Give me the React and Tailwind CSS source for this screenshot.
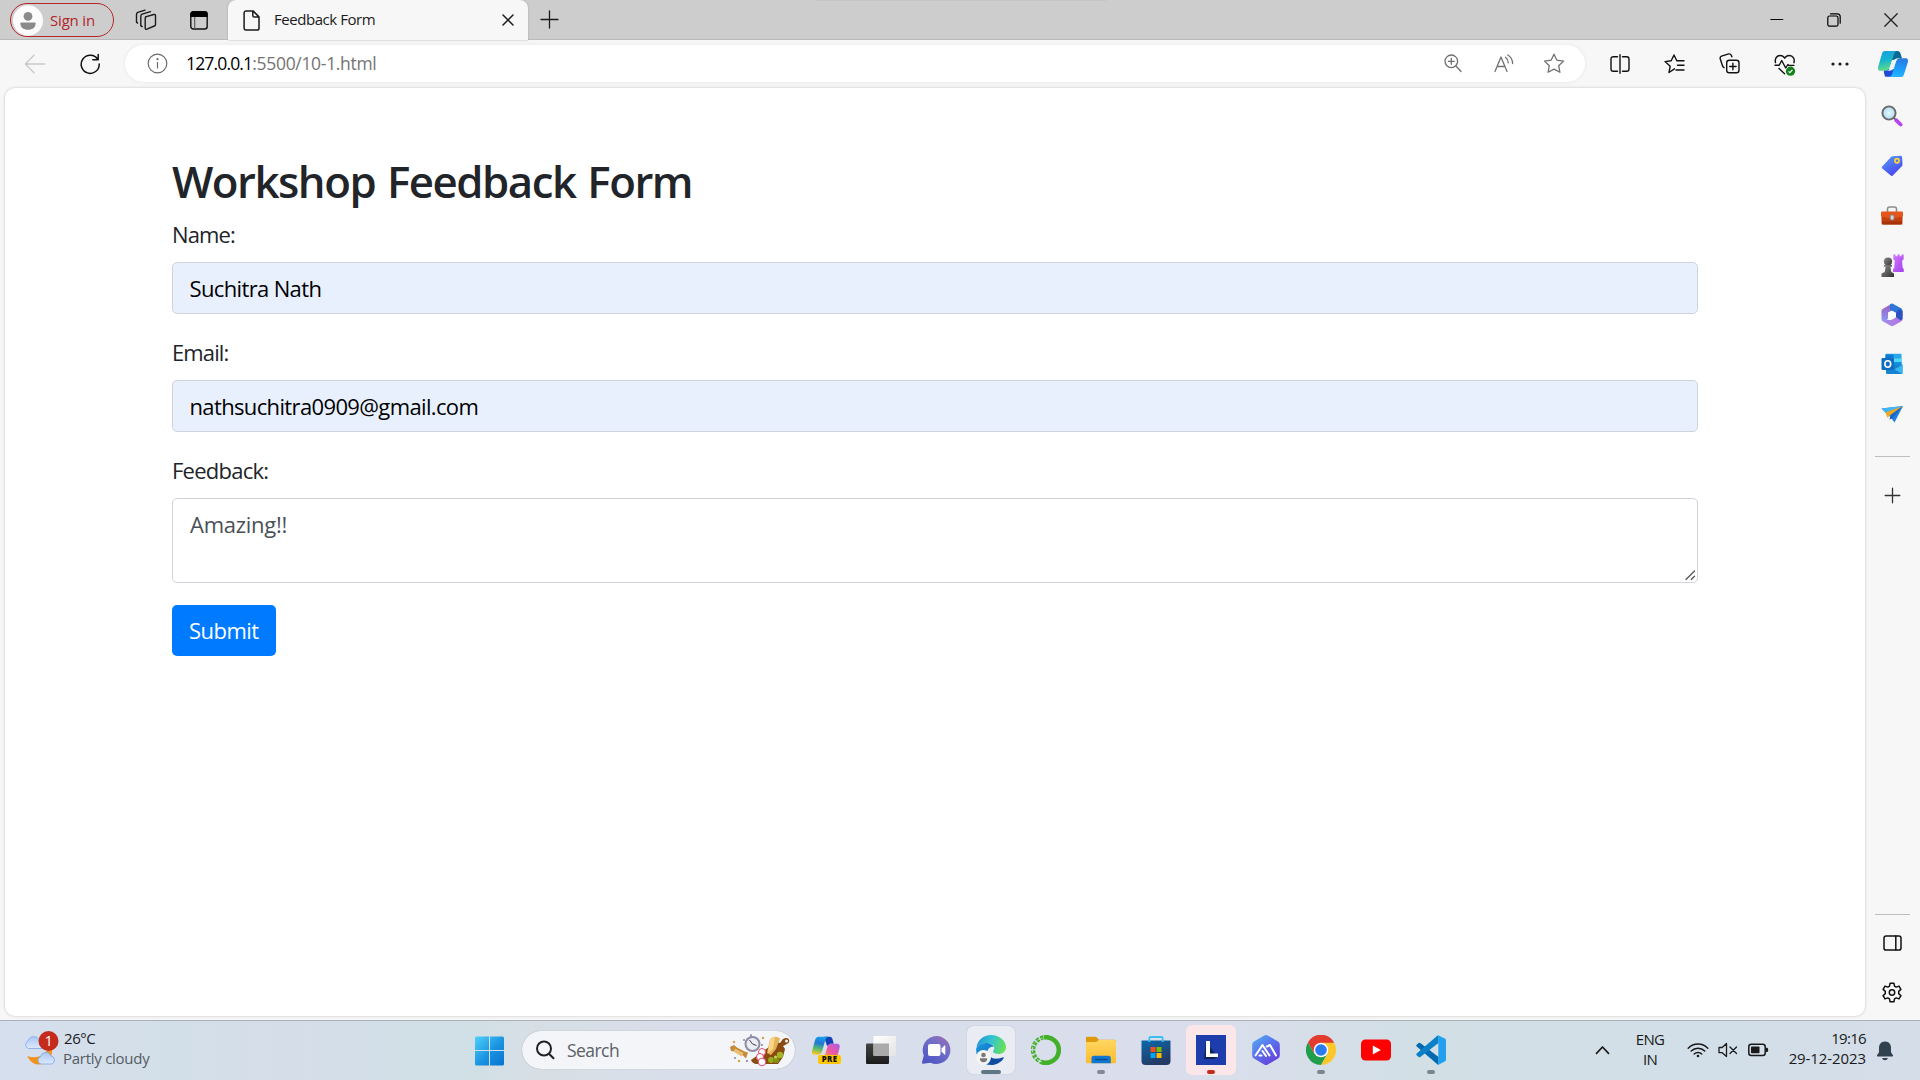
import React from 'react';

const Svg = ({ w, h, children, className = '', sw = 1.4, color = '#1b1b1b' }) => (
  <svg
    width={w}
    height={h}
    viewBox={`0 0 ${w} ${h}`}
    fill="none"
    stroke={color}
    strokeWidth={sw}
    strokeLinecap="round"
    strokeLinejoin="round"
    className={`block shrink-0 ${className}`}
  >
    {children}
  </svg>
);

const Slot = ({ children, className = '' }) => (
  <div className={`flex shrink-0 items-center justify-center ${className}`}>{children}</div>
);

/* ---------- browser chrome ---------- */

function TabBar() {
  return (
    <header className="relative flex h-10 items-start bg-[#cdcdcd] shadow-[inset_0_-1px_0_#b9b9b9]">
      <div className="absolute left-[816px] top-0 h-px w-[290px] bg-[#c5c5c5]" />
      <div className="mt-[3px] ml-[10px] flex h-[34px] w-[104px] items-center rounded-full border border-[#b3262a] pl-[2px]">
        <svg width="30" height="31" viewBox="0 0 30 31" className="block shrink-0">
          <ellipse cx="15" cy="15.5" rx="15" ry="15.3" fill="#fbfbfb" />
          <circle cx="15" cy="11.3" r="4.4" fill="#8b8b8b" />
          <path d="M8 17.5h14c.4 0 .6.3.6.7 0 4.400-3 6.500-7.600 6.500s-7.600-2.100-7.600-6.500c0-.4.2-.7.6-.7z" fill="#8b8b8b" />
        </svg>
        <span className="ml-[7px] text-[15px] leading-[32px] tracking-[-0.012em] whitespace-nowrap text-[#b3262a]">Sign in</span>
      </div>
      <Svg w={22} h={22} className="mt-[9px] ml-[21px]" sw={1.4}>
        <path d="M10.500 7.800 18.800 5.500q1.700-.4 1.700 1.300v8.600q0 1.200-1.200 1.600l-7.300 3.200q-1.800.6-1.800-1.200V9.200q0-1.100 1-1.400z" />
        <path d="M5.800 16.500V7.200q0-1.500 1.300-2L15.500 2.600" />
        <path d="M1.500 13V5.400Q1.500 4 2.800 3.400L10 1.200" />
        <path d="m6 16.800 1.200.8M1.600 13.300l1 .8" />
      </Svg>
      <svg width="18" height="19" viewBox="0 0 18 19" className="mt-[11px] ml-[33px] block">
        <rect x=".8" y=".8" width="16.400" height="17.200" rx="2.500" fill="none" stroke="#111" strokeWidth="1.400" />
        <path d="M.5 6V3A2.700 2.700 0 0 1 3.200.3h11.600A2.700 2.700 0 0 1 17.500 3v3z" fill="#000" />
        <path d="M4.700 6v12" stroke="#555" strokeWidth="1.100" />
      </svg>
      <div className="relative ml-[20px] flex h-10 w-[300px] items-center rounded-t-[8px] bg-[#f7f7f7] pl-[15px] shadow-[0_0_2px_#a0a0a0]">
        <Svg w={17} h={21} sw={1.5}>
          <path d="M3 .9h7l6 6v11.400a1.800 1.800 0 0 1-1.800 1.800H3a1.900 1.900 0 0 1-1.900-1.800V2.700A1.900 1.900 0 0 1 3 .9zM9.800 1v4.400q0 1.700 1.600 1.700h4.400" />
        </Svg>
        <span className="mb-[2px] ml-[14px] text-[15px] leading-[38px] tracking-[-0.030em] whitespace-nowrap text-[#1b1b1b]">Feedback Form</span>
        <Svg w={12} h={12} className="mr-[14px] ml-auto" sw={1.500}>
          <path d="m1 1 10 10M11 1 1 11" />
        </Svg>
      </div>
      <div className="ml-[12px] flex h-[39px] items-center">
        <Svg w={19} h={19} sw={1.300}>
          <path d="M9.500 1v17M1 9.500h17" />
        </Svg>
      </div>
      <div className="ml-auto flex h-[39px] items-center pr-px">
        <Slot className="w-[57px]">
          <Svg w={14} h={14} sw={1.100} color="#000"><path d="M.8 6.500h12" /></Svg>
        </Slot>
        <Slot className="w-[58px]">
          <Svg w={14} h={14} sw={1.200} color="#000">
            <rect x=".8" y="3" width="10.200" height="10.200" rx="1.800" />
            <path d="M3.500.8h6.800a2.900 2.900 0 0 1 2.900 2.900v6.500" />
          </Svg>
        </Slot>
        <Slot className="w-[56px]">
          <Svg w={14} h={14} sw={1.300} color="#222"><path d="m.8.8 12.400 12.400M13.200.8.8 13.200" /></Svg>
        </Slot>
      </div>
    </header>
  );
}

function CopilotLogo() {
  return (
    <svg width="32" height="28" viewBox="0 0 32 28" className="block">
      <defs>
        <linearGradient id="cpa" x1="0" y1="0" x2=".2" y2="1">
          <stop offset="0" stopColor="#1a9ee0" />
          <stop offset=".5" stopColor="#16b3cf" />
          <stop offset="1" stopColor="#5ddb8b" />
        </linearGradient>
        <linearGradient id="cpb" x1=".6" y1="0" x2=".4" y2="1">
          <stop offset="0" stopColor="#2b78dd" />
          <stop offset=".6" stopColor="#1aa0fb" />
          <stop offset="1" stopColor="#27b5ff" />
        </linearGradient>
      </defs>
      <path d="M14 1h6.500c2 0 2.800 1.500 3.300 3.200L25 8.500h-4.500c-2 0-2.800.8-3.400 2.500L14 9z" fill="#0b6a93" />
      <path d="M8.500 26.800h8.500L18 19H9c-2 0-2.500 1.800-2 3.800l.5 2c.2.900.400 1.500 1 2z" fill="#1f4bd8" />
      <path d="M7.800 1H19.500c-1.500.4-2.200 2-2.900 4.300l-3.900 12.200c-.8 2.300-2.200 3.300-4.400 3.300H3.500C1 20.800.6 18.700 1.300 16.300l3.200-11C5.200 2.500 6 1 7.800 1z" fill="url(#cpa)" />
      <path d="M24.200 27H12.500c1.600-.4 2.300-2 3-4.300L19 11.500c.8-2.300 2.200-3.300 4.400-3.300h5.100c2.500 0 2.900 2.100 2.200 4.500l-3.200 10C26.800 25.500 26 27 24.200 27z" fill="url(#cpb)" />
      <path d="M18.600 9.300q1.400-1 3.400-1.100-2.400.5-3.200 3.100l-2 6.200q-.8 2.800-3.600 3.200H10q2.400-.5 3.200-3.200l2-6.200q.8-1.600 3.400-2z" fill="#eef6fb" />
    </svg>
  );
}

function Toolbar() {
  return (
    <div className="flex h-[48px] items-start bg-[#f7f7f7]">
      <div className="flex h-[47px] w-[125px] items-center pl-[24px]">
        <Svg w={22} h={20} sw={1.300} color="#c9c9c9"><path d="M20.500 10H1.500M10 1.200 1.300 10l8.700 8.800" /></Svg>
        <Svg w={22} h={22} className="ml-[33px]" sw={1.500} color="#111">
          <path d="M18.800 6.500A9 9 0 1 0 20.200 11M19.200 1.500v5.200h-5.400" />
        </Svg>
      </div>
      <div className="mt-[5px] flex h-[37px] w-[1460px] items-center rounded-full bg-white pr-[6px] pl-[22px] shadow-[0_0_4px_rgba(0,0,0,0.07)]">
        <Svg w={21} h={21} sw={1.200} color="#6b6b6b">
          <circle cx="10.500" cy="10.500" r="9.300" />
          <path d="M10.500 9.500v5.500" />
          <circle cx="10.500" cy="6.200" r=".5" fill="#6b6b6b" />
        </Svg>
        <span className="ml-[18px] text-[17.5px] leading-[37px] whitespace-nowrap text-[#737373]">
          <span className="tracking-[-0.048em] text-black">127.0.0.1</span>
          <span className="tracking-[-0.018em]">:5500/10-1.html</span>
        </span>
        <div className="ml-auto flex">
          <Slot className="w-[50px]">
            <Svg w={18} h={19} sw={1.300} color="#707070">
              <circle cx="7.300" cy="7.300" r="6.300" />
              <path d="m12 12 5 5.500M7.300 4.300v6M4.300 7.300h6" />
            </Svg>
          </Slot>
          <Slot className="w-[51px]">
            <Svg w={20} h={19} sw={1.300} color="#707070">
              <path d="m1 17.500 6-14.500 6 14.500M3.200 12.500h7.600M11.500 3.300q2.700 2 2.800 5.500M13.800 1q4.700 2.800 4.800 8.500" />
            </Svg>
          </Slot>
          <Slot className="w-[50px]">
            <Svg w={22} h={21} sw={1.300} color="#707070">
              <path d="m11 1.200 2.900 6 6.600.9-4.800 4.600 1.200 6.600-5.900-3.200-5.900 3.200 1.200-6.600L1.500 8.100l6.600-.9z" />
            </Svg>
          </Slot>
        </div>
      </div>
      <div className="ml-[7px] flex h-[47px] items-center">
        <Slot className="w-[55px]">
          <Svg w={20} h={20} sw={1.400} color="#111">
            <path d="M7.500 2.700H3.200A2.200 2.200 0 0 0 1 4.900v10.200a2.200 2.200 0 0 0 2.200 2.200h4.300M12.500 2.700h4.300A2.200 2.200 0 0 1 19 4.900v10.200a2.200 2.200 0 0 1-2.200 2.200h-4.300M10 .8v18.400" />
          </Svg>
        </Slot>
        <Slot className="w-[55px]">
          <Svg w={21} h={20} sw={1.400} color="#111">
            <path d="M10.500 14.800 5 18.500l1.200-6.300L1 7.600l6.200-.8L10 1l2.800 5.800H20M13.500 11.300H20M12 16h8" />
          </Svg>
        </Slot>
        <Slot className="w-[55px]">
          <Svg w={21} h={21} sw={1.400} color="#111">
            <rect x="7.700" y="7.300" width="12.300" height="12.500" rx="2.600" />
            <path d="M13.900 10.300v6.500M10.700 13.500h6.400M5 14.700Q3.800 14 3.400 12.500L1.200 5.700Q.8 4 2.500 3.200L9.700.9q1.800-.3 2.600 1.400l.6 1.500" />
          </Svg>
        </Slot>
        <Slot className="w-[55px]">
          <svg width="22" height="22" viewBox="0 0 22 22" fill="none" className="mt-[2px] block">
            <path d="M1.500 8.500C.5 4.500 3 1.500 6 1.500c2.200 0 3.700 1 4.700 2.700 1-1.700 2.500-2.700 4.700-2.700 3.500 0 5.600 3.500 4.500 7.200M1 11.300h4.200L7.700 6.500l4 7.500 2.200-3.500 1 .9h5M5 14.500l5.600 5.200" stroke="#111" strokeWidth="1.400" strokeLinecap="round" strokeLinejoin="round" />
            <circle cx="16.500" cy="17.200" r="4.600" fill="#13801b" />
            <path d="m14.600 17.300 1.300 1.300 2.500-2.700" stroke="#fff" strokeWidth="1.100" />
          </svg>
        </Slot>
        <Slot className="w-[55px]">
          <svg width="18" height="4" viewBox="0 0 18 4" fill="#1b1b1b" className="block">
            <circle cx="2" cy="2" r="1.600" /><circle cx="9" cy="2" r="1.600" /><circle cx="16" cy="2" r="1.600" />
          </svg>
        </Slot>
        <Slot className="w-[52px]"><CopilotLogo /></Slot>
      </div>
    </div>
  );
}

/* ---------- sidebar ---------- */

function Sidebar() {
  return (
    <aside className="flex w-[52px] flex-col items-center">
      <Slot className="h-[51px] w-full">
        <svg width="22" height="22" viewBox="0 0 22 22" className="mt-[4px]">
          <defs><radialGradient id="lens"><stop offset="0" stopColor="#e6f6ff" /><stop offset="1" stopColor="#aedcf5" /></radialGradient></defs>
          <path d="m12.500 12.500 2.500 2.500" stroke="#666" strokeWidth="2" />
          <path d="m15.300 15.300 4.300 4.200" stroke="#b843f0" strokeWidth="3.800" strokeLinecap="round" />
          <circle cx="8" cy="8" r="6.600" fill="url(#lens)" stroke="#696969" strokeWidth="1.900" />
        </svg>
      </Slot>
      <Slot className="h-[50px] w-full">
        <svg width="22" height="22" viewBox="0 0 22 22" className="mt-[3px]">
          <defs><linearGradient id="tag" x1="0" y1="0" x2=".6" y2="1"><stop offset="0" stopColor="#56a4f5" /><stop offset="1" stopColor="#4844f0" /></linearGradient></defs>
          <path d="M11.500 1.300 19.500.8q1.500 0 1.600 1.400l.4 7.300q0 1-.7 1.700l-9 9.300q-1 1-2 .1l-8.500-7q-1.200-1.100-.1-2.200l8.800-9.500q.6-.6 1.500-.6z" fill="url(#tag)" />
          <circle cx="16" cy="5.700" r="2.100" fill="#4b7eea" stroke="#ffd43d" strokeWidth="1.700" />
        </svg>
      </Slot>
      <Slot className="h-[50px] w-full">
        <svg width="24" height="20" viewBox="0 0 24 20" className="mt-[3px]">
          <path d="M7.500 6V3.200A2.200 2.200 0 0 1 9.700 1h4.600a2.200 2.200 0 0 1 2.200 2.200V6" fill="none" stroke="#8a8a8a" strokeWidth="1.600" />
          <rect x="1.500" y="8" width="21" height="10.500" rx="1.500" fill="#c23f0e" />
          <path d="M2.200 5.500h19.600q1.200 0 1.200 1.300v3.500L14 12.500h-4L1 10.300V6.800q0-1.300 1.200-1.300z" fill="#e4561c" />
          <path d="M2 15.500h20v2q0 1-1 1H3q-1 0-1-1z" fill="#a8330b" />
          <rect x="10.200" y="9" width="3.800" height="5" rx="1" fill="#d8d8d8" stroke="#777" strokeWidth=".8" />
        </svg>
      </Slot>
      <Slot className="h-[50px] w-full">
        <svg width="24" height="24" viewBox="0 0 24 24" className="mt-[3px]">
          <defs>
            <linearGradient id="rook" x1="0" y1="0" x2="1" y2="1"><stop offset="0" stopColor="#d678ff" /><stop offset="1" stopColor="#a040ec" /></linearGradient>
            <linearGradient id="pawn" x1="0" y1="0" x2="1" y2="1"><stop offset="0" stopColor="#8d8d8d" /><stop offset="1" stopColor="#333" /></linearGradient>
          </defs>
          <path d="M13.500.5h2v1.800h2V.5h2.200v1.800h1.900V.5h2V5q0 .8-.8 1.200l-.8.400.7 7.400 1 1v3H13v-3l1.200-1 .6-7.400-.8-.4q-.7-.4-.7-1.200z" fill="url(#rook)" />
          <circle cx="8" cy="7.500" r="4.100" fill="url(#pawn)" />
          <path d="M4 11h8v1.800h-1.600l.9 5.200 2.700 1.500V23H1.500v-3.500L4.700 18l.9-5.200H4z" fill="url(#pawn)" />
        </svg>
      </Slot>
      <Slot className="h-[50px] w-full">
        <svg width="22" height="24" viewBox="0 0 22 24" className="mt-[2px]">
          <defs>
            <linearGradient id="m1" x1="0" y1="0" x2="0" y2="1"><stop offset="0" stopColor="#9a5cc4" /><stop offset="1" stopColor="#8b9ff5" /></linearGradient>
            <linearGradient id="m2" x1="0" y1="0" x2="1" y2="0"><stop offset="0" stopColor="#a78be8" /><stop offset="1" stopColor="#b274e0" /></linearGradient>
          </defs>
          <path d="M9.500 1.500 2 5.800Q.5 6.700.5 8.300v7.600q0 1.700 1.500 2.500l2 1 3-4V9.500L14 6z" fill="url(#m1)" />
          <path d="m9 1.300 1-.5q1.200-.5 2.300.1L20 5.300q1.500.9 1.500 2.500v5.700L15 9.800 9 7z" fill="#2e76d8" />
          <path d="m21.500 8v8q0 1.600-1.500 2.500l-7.500 4.300q-1.400.8-2.800 0L4 19.500q-1.500-.8 0-2.500h6l5-3.200V10z" fill="url(#m2)" />
          <path d="M21.500 8v8q-1 2-3 .5L15 14v-4l3-4z" fill="#2b53bd" />
          <path d="M11 7.800 14.800 10v4.400L11 16.500l-3.800-2.200V10z" fill="#fff" />
        </svg>
      </Slot>
      <Slot className="h-[50px] w-full">
        <svg width="22" height="22" viewBox="0 0 22 22">
          <rect x="4.500" y=".8" width="16" height="14" rx="1" fill="#28a8ea" />
          <path d="M4.500 1.500h8V8h-8z" fill="#0f78d4" /><path d="M12.500 5.500h8V10h-8z" fill="#50d9ff" />
          <path d="M12 9h8.500v3H12z" fill="#1490df" />
          <path d="M5 11.500h16.500v8.300q0 1.200-1.200 1.200H6.200Q5 21 5 19.800z" fill="#1683d2" />
          <path d="m21.500 11.500-8 5 7.500 4.300q.5-.4.500-1z" fill="#35b8f1" />
          <rect x=".5" y="5" width="12.500" height="12" rx="1.200" fill="#0f6cc0" />
          <ellipse cx="6.800" cy="11" rx="2.900" ry="3.200" fill="none" stroke="#fff" strokeWidth="1.600" />
        </svg>
      </Slot>
      <Slot className="h-[50px] w-full">
        <svg width="23" height="18" viewBox="0 0 23 18">
          <path d="M.5 3.500 22 1 13.500 17.500 9.500 12z" fill="#1f7fe0" />
          <path d="M.5 3.500 22 1 6.500 10z" fill="#43b5f5" />
          <path d="M22 1 4.500 7.500l2 5.300 2.700-2.600z" fill="#f2a51d" />
          <path d="m22 1-12.500 9.300-1 4.200 2.800-1z" fill="#1767c8" />
        </svg>
      </Slot>
      <div className="mt-[17px] h-px w-[35px] bg-[#bdbdbd]" />
      <Svg w={17} h={17} className="mt-[30px]" sw={1.300} color="#333"><path d="M8.500 1.200v14.600M1.200 8.500h14.600" /></Svg>
      <div className="mt-auto h-px w-[35px] bg-[#bdbdbd]" />
      <Svg w={19} h={16} className="mt-[20px]" sw={1.500} color="#111">
        <rect x="1" y=".9" width="17" height="14.200" rx="2.200" /><path d="M12.800 1v14" />
      </Svg>
      <Svg w={22} h={22} className="mt-[31px] mb-[16px]" sw={1.500} color="#111">
        <path d="M9.100 1.200h3.800l.6 2.900 1.700 1 2.800-1 1.900 3.300-2.200 2v2.200l2.200 2-1.900 3.300-2.800-1-1.700 1-.6 2.900H9.100l-.6-2.900-1.700-1-2.800 1-1.900-3.300 2.200-2V9.400l-2.200-2L4 4.100l2.800 1 1.700-1z" />
        <circle cx="11" cy="10.500" r="2.700" />
      </Svg>
    </aside>
  );
}

/* ---------- page ---------- */

const Field = ({ label, value }) => (
  <div className="mb-[22px]">
    <label className="mb-[11px] block h-[33px] text-[22px] leading-[33px] tracking-[-0.040em]">{label}</label>
    <div role="textbox" className="h-[52px] rounded-[5px] border border-[#ced4da] bg-[#e8f0fe] px-[16.500px] text-[22px] leading-[50px] tracking-[-0.029em] text-black">
      {value}
    </div>
  </div>
);

function FeedbackPage() {
  return (
    <main className="w-[1860px] rounded-[10px] bg-white pt-[66px] pl-[167px] text-[#212529] shadow-[0_0_3px_rgba(0,0,0,0.22)]">
      <form className="w-[1526px]">
        <h2 className="mb-[11px] h-[53px] text-[43.75px] leading-[55px] font-semibold tracking-[-0.034em] [word-spacing:2px] whitespace-nowrap">
          Workshop Feedback Form
        </h2>
        <Field label="Name:" value="Suchitra Nath" />
        <Field label="Email:" value="nathsuchitra0909@gmail.com" />
        <label className="mb-[11px] block h-[33px] text-[22px] leading-[33px] tracking-[-0.034em]">Feedback:</label>
        <div role="textbox" className="flex h-[85px] justify-between rounded-[5px] border border-[#ced4da] bg-white pt-[9px] pl-[17px] text-[22px] leading-[33px] tracking-[-0.012em] text-[#495057]">
          Amazing!!
          <Svg w={11} h={11} className="mr-px mb-px self-end" sw={1.300} color="#555">
            <path d="m1 9.500 8.500-8.500M6.300 9.500l3.200-3.200" />
          </Svg>
        </div>
        <div className="mt-[22px] h-[51px] w-[104px] rounded-[5px] bg-[#007bff] pl-[17px] text-[22px] leading-[51px] tracking-[-0.024em] text-white">Submit</div>
      </form>
    </main>
  );
}

/* ---------- taskbar ---------- */

const Dot = ({ className }) => <div className={`absolute bottom-[6px] h-1 rounded-full ${className}`} />;

const TaskIcon = ({ children, tile = '', dot }) => (
  <div className="relative flex h-[60px] w-[55px] shrink-0 items-center justify-center">
    <div className={`flex items-center justify-center rounded-[6px] ${tile || 'h-12 w-12'}`}>{children}</div>
    {dot && <Dot className={dot} />}
  </div>
);

function Apps() {
  return (
    <div className="mb-px ml-[3px] flex">
      <TaskIcon>
        <svg width="30" height="30" viewBox="0 0 30 30">
          <defs>
            <linearGradient id="pa" x1=".5" y1="0" x2=".3" y2="1"><stop offset="0" stopColor="#149fe8" /><stop offset=".35" stopColor="#2277d8" /><stop offset=".65" stopColor="#4fba72" /><stop offset="1" stopColor="#ffc927" /></linearGradient>
            <linearGradient id="pb" x1="1" y1="0" x2="0" y2="1"><stop offset="0" stopColor="#a95cf5" /><stop offset=".6" stopColor="#f0589b" /><stop offset="1" stopColor="#ff9a55" /></linearGradient>
          </defs>
          <path d="M13 1.800h5.500c2 0 2.700 1.200 3.200 3l1 4h-3.500L16 11z" fill="#1240b8" />
          <path d="M7.500 1.800h9.500c-1.800.7-2.400 2.300-3 4.300L11 16.500c-.8 2.200-1.800 3.200-4 3.200H3.500C1 19.700.6 17.700 1.200 15.500L4 5.300C4.700 3 5.800 1.800 7.500 1.800z" fill="url(#pa)" />
          <path d="M13 21c1.500-2 2.300-5.500 3.200-8.500.8-2.500 1.800-3.700 3.800-3.700h6c2.500 0 3.200 1.800 2.600 4L26.500 21z" fill="url(#pb)" />
          <rect x="7" y="20" width="23" height="9" rx="2" fill="#ffc700" />
          <text x="18.500" y="27.300" textAnchor="middle" fontSize="7.800" fontWeight="800" fontFamily="Open Sans" fill="#111" letterSpacing=".4">PRE</text>
        </svg>
      </TaskIcon>
      <TaskIcon>
        <svg width="30" height="30" viewBox="0 0 30 30">
          <defs>
            <linearGradient id="tv" x1="0" y1="0" x2="0" y2="1"><stop offset="0" stopColor="#444" /><stop offset="1" stopColor="#1b1b1b" /></linearGradient>
            <linearGradient id="tv2" x1="0" y1="0" x2="1" y2="1"><stop offset="0" stopColor="#fff" /><stop offset="1" stopColor="#e3e3e3" /></linearGradient>
          </defs>
          <rect x="0" y="8.500" width="23" height="20.500" rx="1" fill="url(#tv)" />
          <rect x="7.500" y="1" width="22.500" height="20" rx="1" fill="url(#tv2)" />
          <path d="M7.500 8.500H23v12.500H8.500q-1 0-1-1z" fill="#aaa" />
        </svg>
      </TaskIcon>
      <TaskIcon>
        <svg width="30" height="30" viewBox="0 0 30 30">
          <defs><linearGradient id="ch" x1="1" y1="0" x2=".3" y2="1"><stop offset="0" stopColor="#a568ad" /><stop offset=".4" stopColor="#7470c8" /><stop offset="1" stopColor="#5057c2" /></linearGradient></defs>
          <path d="M15.500 1a14 14 0 1 1-6 26.700L2 28.700q-1.400 0-1-1.500L2.800 20.500A14 14 0 0 1 15.500 1z" fill="url(#ch)" />
          <rect x="7" y="9" width="12.500" height="12" rx="2" fill="#fff" />
          <path d="m20.500 13.500 3-3q.8-.5.800.4v8.200q0 .9-.8.4l-3-3z" fill="#fff" />
        </svg>
      </TaskIcon>
      <TaskIcon tile="h-12 w-12 bg-[#e9edf3] shadow-[0_0_1px_#9aa3ad]" dot="w-5 bg-[#607684]">
        <svg width="30" height="30" viewBox="0 0 30 30">
          <defs>
            <linearGradient id="e1" x1="0" y1=".3" x2="1" y2=".5"><stop offset="0" stopColor="#2493d5" /><stop offset=".5" stopColor="#33c5d1" /><stop offset="1" stopColor="#6be150" /></linearGradient>
            <linearGradient id="e2" x1="0" y1="0" x2="1" y2="1"><stop offset="0" stopColor="#1a9ade" /><stop offset="1" stopColor="#0d5fb8" /></linearGradient>
          </defs>
          <path d="M.5 12.500C1.500 5 7.500 0 15 0c8.500 0 15 6 15 12 0 4.500-3.500 7-7.500 7-3.200 0-5.500-1.200-5.500-2.500 0-.8 1.200-1.300 1.200-3.200 0-2.800-3-5.200-7-5.200C6.500 8.100 2.500 10 .5 12.500z" fill="url(#e1)" />
          <path d="M.3 13C2.500 9.700 6.500 8 10.500 8c3.500 0 6.500 1.700 7.300 4-4-1-7.300 2.500-6.300 7.500.8 4.500 4.500 7.500 8.500 7.700C17 29 16 30 14 30 6 29.500-1 22 .3 13z" fill="url(#e2)" />
          <path d="M12 17c0 5.500 6 8.500 14.500 5.500 1-.4 1.600.2 1 1C25 27.500 20 30 15.500 30 10 28 9 20 12 17z" fill="#0d4c9e" />
          <circle cx="7.500" cy="22.500" r="7.500" fill="#f4f4f4" />
          <circle cx="7.500" cy="20" r="2.300" fill="#777" />
          <path d="M3.800 23.200h7.400c0 2.800-1.500 4-3.700 4s-3.700-1.200-3.700-4z" fill="#777" />
        </svg>
      </TaskIcon>
      <TaskIcon>
        <svg width="30" height="30" viewBox="0 0 30 30" fill="none">
          <path d="M13 2.400A12.800 12.800 0 1 1 11 27.200" stroke="#43b02a" strokeWidth="4.600" />
          <path d="M12 27.500A12.800 12.800 0 0 1 13.500 2.300" stroke="#43b02a" strokeWidth="4.300" strokeDasharray="3.200 1.300" />
          <path d="M11 26.800A12 12 0 0 1 11.500 3.200" stroke="#d9dfec" strokeWidth="1" strokeDasharray="2 1.500" />
        </svg>
      </TaskIcon>
      <TaskIcon dot="w-2 bg-[#848993]">
        <svg width="30" height="28" viewBox="0 0 30 28">
          <defs><linearGradient id="fo" x1="0" y1="0" x2="0" y2="1"><stop offset="0" stopColor="#ffd762" /><stop offset="1" stopColor="#fcbb2c" /></linearGradient></defs>
          <path d="M0 2Q0 .8 1.200.8h8q1 0 1.700.7L13 3.800H28.500q1.500 0 1.500 1.500V8H0z" fill="#dd9a0e" />
          <path d="M0 7q0-1 1-1h9l3-2h15.500q1.500 0 1.500 1.500V26q0 1.200-1.200 1.200H1.200Q0 27.200 0 26z" fill="url(#fo)" />
          <path d="M5.500 27.200v-5q0-2.400 2.400-2.400h14.500q2.400 0 2.400 2.400v5z" fill="#1277cf" />
          <path d="M9.500 23.500h11.500" stroke="#0a4f94" strokeWidth="1.500" strokeLinecap="round" />
        </svg>
      </TaskIcon>
      <TaskIcon>
        <svg width="30" height="30" viewBox="0 0 30 30">
          <defs><linearGradient id="st" x1="0" y1="0" x2=".4" y2="1"><stop offset="0" stopColor="#0a69ad" /><stop offset="1" stopColor="#253a63" /></linearGradient></defs>
          <path d="M.5 5.500h29V26q0 4-4 4h-21q-4 0-4-4z" fill="url(#st)" />
          <path d="M8.300 7V3.500q0-1.500 1.500-1.500h10.400q1.500 0 1.500 1.500V7" fill="none" stroke="#38c0f0" strokeWidth="1.800" />
          <path d="M9.500 12H14.500v5h-5z" fill="#f25022" /><path d="M15.500 12h5v5h-5z" fill="#7fba00" />
          <path d="M9.500 18h5v5h-5z" fill="#00a4ef" /><path d="M15.500 18h5v5h-5z" fill="#ffb900" />
        </svg>
      </TaskIcon>
      <TaskIcon tile="h-[50px] w-[50px] bg-[#fbe6e9]" dot="w-2 bg-[#c42b1c]">
        <div className="flex h-[30px] w-[30px] items-center justify-center bg-[#1c3dab]">
          <svg width="16" height="20" viewBox="0 0 16 20">
            <path d="M3 1 1 19h10l3-2z" fill="#0b2450" />
            <path d="M3 1h4v12.500h8V17H3z" fill="#fff" />
          </svg>
        </div>
      </TaskIcon>
      <TaskIcon>
        <svg width="30" height="32" viewBox="0 0 30 32">
          <defs><linearGradient id="ai" x1="0" y1="0" x2=".7" y2="1"><stop offset="0" stopColor="#4fb4f3" /><stop offset=".5" stopColor="#5a73ec" /><stop offset="1" stopColor="#6540dc" /></linearGradient></defs>
          <path d="M13.200 1.500q1.800-1 3.600 0L27 7.500q1.800 1 1.800 3.200v10.600q0 2.200-1.800 3.200l-10.200 6q-1.800 1-3.600 0L3 24.500q-1.800-1-1.800-3.200V10.700Q1.200 8.500 3 7.500z" fill="url(#ai)" />
          <path d="M4.500 21.500 11.500 11l7 10.500M8.500 21.500h2M16 12.500l3-1.500 6 10.500M11.500 17l3.500 5" fill="none" stroke="#fff" strokeWidth="2" strokeLinecap="round" strokeLinejoin="round" />
        </svg>
      </TaskIcon>
      <TaskIcon dot="w-2 bg-[#7d858c]">
        <svg width="30" height="30" viewBox="0 0 30 30">
          <path d="M15 15 2 7.500A15 15 0 0 1 28 7.500z" fill="#e33b2e" />
          <path d="M2 7.500A15 15 0 0 0 15 30l6.500-11.200L15 15 8.500 18.800z" fill="#219e4c" />
          <path d="M28 7.500A15 15 0 0 1 15 30l6.500-11.200V11.200L15 7.500z" fill="#fcc72b" />
          <path d="M15 7.500H28A15 15 0 0 0 2 7.500l6.500 11.200z" fill="#e33b2e" />
          <circle cx="15" cy="15" r="7.300" fill="#fff" /><circle cx="15" cy="15" r="5.800" fill="#2a7bf0" />
        </svg>
      </TaskIcon>
      <TaskIcon>
        <svg width="30" height="22" viewBox="0 0 30 22">
          <rect x="0" y=".5" width="30" height="21" rx="4.500" fill="#f00" /><path d="m11.800 6.500 8 4.500-8 4.500z" fill="#fff" />
        </svg>
      </TaskIcon>
      <TaskIcon dot="w-2 bg-[#7d858c]">
        <svg width="30" height="30" viewBox="0 0 30 30">
          <path d="M.6 9.800 2.700 8q.8-.6 1.600 0L22.500 22v7.500L21 29 .7 11.400q-.8-.8-.1-1.600z" fill="#0069b0" />
          <path d="M.6 20.200 2.700 22q.8.600 1.600 0L22.500 8V.5L21 1 .7 18.600q-.8.800-.1 1.600z" fill="#0a80c8" />
          <path d="m22 .2 6.800 3.200q1.200.6 1.200 1.800v19.600q0 1.200-1.200 1.800L22 29.900q-1 .1-1.700-.6 1.900.9 2-.9V1.600Q22.200-.2 20.300.8 21-.1 22 .2z" fill="#22a0f0" />
        </svg>
      </TaskIcon>
    </div>
  );
}

function SearchArt() {
  return (
    <svg width="62" height="34" viewBox="0 0 62 34" className="ml-auto block">
      <g fill="#d9a24a">
        <circle cx="5" cy="9" r="1.200" /><circle cx="15" cy="7" r="1" fill="#8f7fae" /><circle cx="3" cy="14" r="1" fill="#8f7fae" /><circle cx="34" cy="5" r="1.200" /><circle cx="33" cy="12" r="1" fill="#8f7fae" /><circle cx="6" cy="25" r="1" fill="#8f7fae" /><circle cx="10" cy="28" r="1.200" /><circle cx="18" cy="28" r="1.100" fill="#8f7fae" /><circle cx="19" cy="9" r="1" />
      </g>
      <path d="m1 14 4-2 3 2.500 7.500 4 3.500 1-1 3-1 3-3-3-8-4-4-.5z" fill="#c98a3a" />
      <path d="m6 15.500 8.500 4.500-2 3.500-8-5z" fill="#e9bf74" />
      <g fill="none" stroke="#8d8ba5" strokeWidth="2"><circle cx="23.500" cy="11" r="7" fill="#ececf4" /><path d="M22 3.500V1.500" /></g>
      <path d="m20.500 7 3 4 4 1.500" stroke="#444" strokeWidth="1" fill="none" />
      <path d="M22 27 47 9l4 1 3-4q4-2 6 .5 1 3-2 4.500l-4 2 2 3-2 8-5 7H27q-4-1-5-4z" fill="#8a4b12" />
      <circle cx="57.500" cy="8" r="1.500" fill="#f3f5f9" />
      <path d="m38 20 3-14q5-4 10-.5L47 16l-5 6z" fill="#e8b355" />
      <path d="m41 6 5-2.500L44 16l-5 4z" fill="#f7d58a" />
      <circle cx="33" cy="19" r="3.500" fill="#fff" stroke="#e84d6e" /><circle cx="31" cy="24" r="3.500" fill="#fff" stroke="#e84d6e" /><circle cx="33" cy="29" r="3.800" fill="#fff" stroke="#e84d6e" />
      <circle cx="42" cy="27" r="3" fill="#9aa91e" /><circle cx="47" cy="27" r="3" fill="#7e9412" /><circle cx="51" cy="22" r="3.200" fill="#a3b529" /><circle cx="46.500" cy="24" r="1.500" fill="#c7d453" />
    </svg>
  );
}

function Taskbar() {
  return (
    <footer className="flex h-[60px] items-center border-t border-[#a9b0b9] bg-[linear-gradient(90deg,#d6dfee_0%,#d3dfe8_9%,#d5dde9_15%,#d0e0e6_24%,#d7dfe5_28%,#d8deeb_38%,#dadeec_62%,#d2dfe5_74%,#d2dfe8_88%,#d5dde9_100%)] text-[15px] leading-5 text-[#1a1a1a]">
      <div className="flex h-[60px] w-[474px] items-center pl-[24px]">
        <svg width="36" height="36" viewBox="0 0 36 36" className="mb-[5px] block shrink-0">
          <defs><linearGradient id="cl" x1="0" y1="0" x2="0" y2="1"><stop offset="0" stopColor="#a9c8f5" /><stop offset="1" stopColor="#dce9fc" /></linearGradient></defs>
          <path d="M4.500 18.500A4 4 0 0 1 4 11a6 6 0 0 1 11.500 0q3 1.500 2.500 7.500z" fill="url(#cl)" stroke="#7fa7e5" strokeWidth=".8" />
          <path d="M28 20c1 8-6 15-14 14.500-5-.4-9-4-10.500-8.500C11 29 21 26 23 20z" fill="#f2921f" />
          <path d="M17 34a3.800 3.800 0 0 1-.5-7.300A5.500 5.500 0 0 1 27 26a4.200 4.200 0 0 1 1 8z" fill="url(#cl)" stroke="#7fa7e5" strokeWidth=".8" />
          <circle cx="24.500" cy="11" r="10" fill="#c42b1c" />
          <text x="24.800" y="16" textAnchor="middle" fontSize="14" fontFamily="Open Sans" fill="#fff">1</text>
        </svg>
        <div className="mb-[5px] ml-[4px]">
          <div className="tracking-[-0.030em]">26°C</div>
          <div className="-ml-px tracking-[-0.018em] text-[#555c63]">Partly cloudy</div>
        </div>
      </div>
      <div className="flex w-12 shrink-0 items-center">
        <svg width="30" height="30" viewBox="0 0 30 30" className="ml-[1px] block">
          <defs><linearGradient id="wn" x1="0" y1="0" x2="29" y2="29" gradientUnits="userSpaceOnUse"><stop offset="0" stopColor="#4fd2fb" /><stop offset=".55" stopColor="#1a93e0" /><stop offset="1" stopColor="#0873d2" /></linearGradient></defs>
          <path d="M1.500.5H14V14H0V2Q0 .5 1.500.5zM15 .5h12.500Q29 .5 29 2v12H15zM0 15h14v14.500H1.500Q0 29.500 0 28zM15 15h14v13q0 1.500-1.500 1.500H15z" fill="url(#wn)" />
        </svg>
      </div>
      <div className="mb-px flex h-[38px] w-[273px] shrink-0 items-center rounded-full bg-[#f3f5f9] pr-[4px] pl-[13px] shadow-[0_0_1px_#8d949c]">
        <Svg w={20} h={20} sw={2} color="#222"><circle cx="9" cy="8.500" r="7" /><path d="m14 13.800 4.500 4.500" /></Svg>
        <span className="ml-[12px] text-[17.5px] leading-[37px] tracking-[-0.032em] text-[#5b5f65]">Search</span>
        <SearchArt />
      </div>
      <Apps />
      <div className="ml-auto flex items-center pr-[26px]">
        <Svg w={15} h={10} className="mb-px" sw={1.700}><path d="m1.500 8.300 6-6.300 6 6.300" /></Svg>
        <div className="mb-[3px] ml-[22px] w-[36px] text-center tracking-[-0.045em]"><div>ENG</div><div>IN</div></div>
        <svg width="22" height="16" viewBox="0 0 22 16" fill="none" stroke="#1a1a1a" strokeWidth="1.500" className="mb-px ml-[19px] block">
          <path d="M1.200 6.200a13.800 13.800 0 0 1 19.600 0M4.200 9a9.700 9.700 0 0 1 13.600 0M7.200 12a5.400 5.400 0 0 1 7.600 0" strokeLinecap="round" />
          <circle cx="11" cy="14" r="1.300" fill="#1a1a1a" stroke="none" />
        </svg>
        <Svg w={20} h={16} className="mb-px ml-[9px]" sw={1.300}>
          <path d="M1 5.500h3.200L8.500 1.500v13L4.200 10.700H1zM12 5l6.500 6.500M18.500 5 12 11.500" />
        </Svg>
        <svg width="21" height="14" viewBox="0 0 21 14" className="mb-px ml-[10px] block">
          <rect x=".8" y="1.300" width="16.400" height="11.200" rx="2.500" fill="none" stroke="#1a1a1a" strokeWidth="1.500" />
          <rect x="3" y="3.500" width="8.500" height="6.800" rx=".8" fill="#1a1a1a" /><path d="M18 4.700h1.200q1 .3 1 2.200t-1 2.200H18z" fill="#1a1a1a" />
        </svg>
        <div className="mb-[5px] ml-[17px] w-[80px] text-right whitespace-nowrap"><div className="tracking-[-0.045em]">19:16</div><div className="tracking-[-0.006em]">29-12-2023</div></div>
        <svg width="18" height="20" viewBox="0 0 18 20" className="ml-[10px] block">
          <path d="M9 .5c4 0 6 3 6 6.300v4.500l2 3q.4 1.200-.8 1.200H1.800Q.6 15.500 1 14.300l2-3V6.800C3 3.500 5 .5 9 .5z" fill="#31414e" />
          <path d="M6 17h6q-.8 2.200-3 2.200T6 17z" fill="#31414e" />
        </svg>
      </div>
    </footer>
  );
}

export default function App() {
  return (
    <div className="flex h-[1080px] w-[1920px] flex-col overflow-hidden bg-[#f7f7f7] font-['Open_Sans','Noto_Sans',sans-serif]">
      <TabBar />
      <Toolbar />
      <div className="flex h-[932px] pl-[5px]">
        <div className="flex h-[928px]"><FeedbackPage /></div>
        <div className="ml-px flex h-[932px]"><Sidebar /></div>
      </div>
      <Taskbar />
    </div>
  );
}
